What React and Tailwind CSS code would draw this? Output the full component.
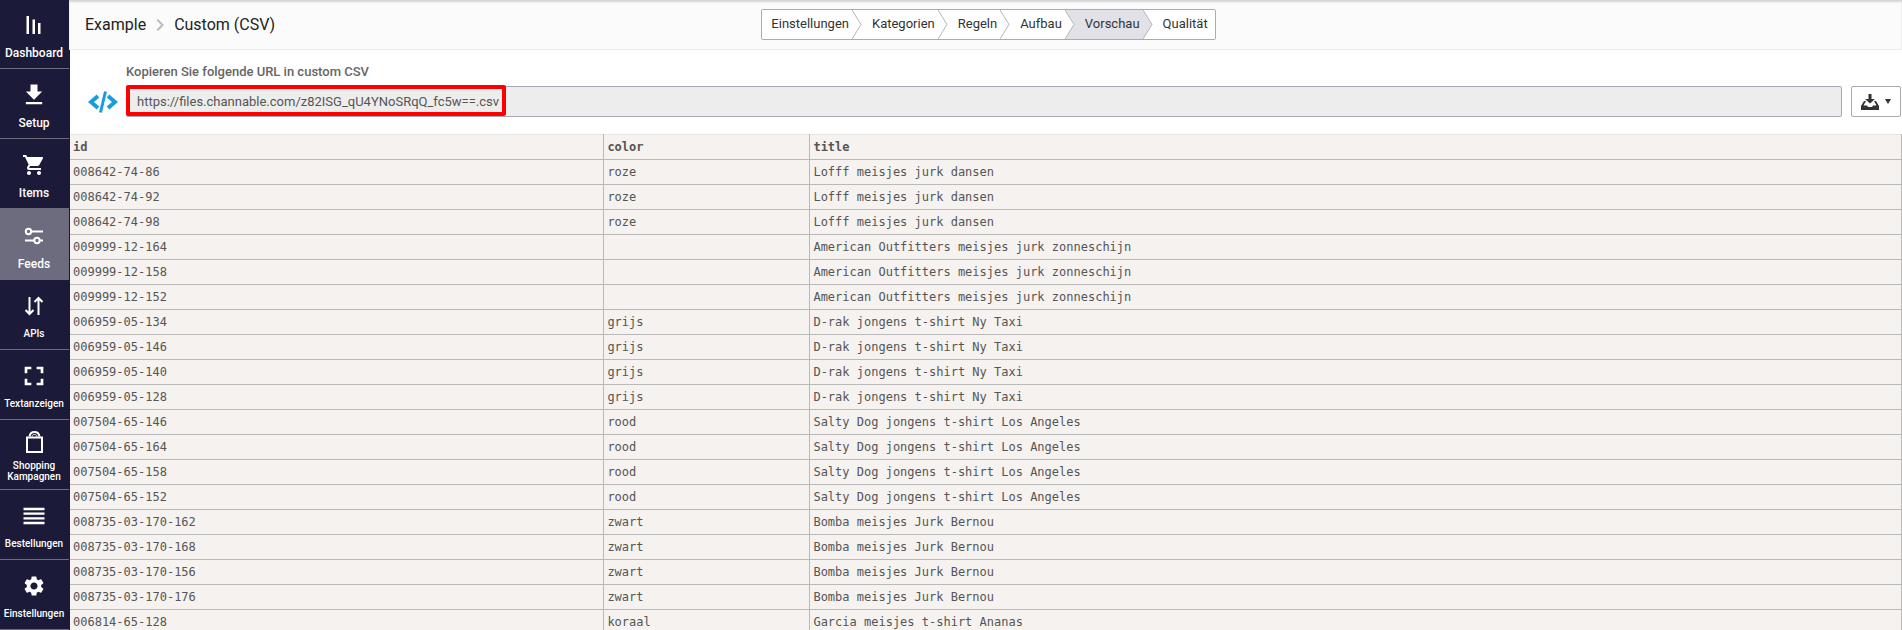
import { Fragment, useState } from "react";
import {
  MdChevronRight,
  MdFileDownload,
  MdFullscreen,
  MdReorder,
  MdSettings,
  MdShoppingCart,
} from "react-icons/md";

const BarsIcon = () => (
  <svg width="24" height="24" viewBox="0 0 24 24" fill="currentColor">
    <path d="M4.5 3h2.500v18H4.500zM10.500 6.500h2.500V21h-2.500zM16 10h2.500v11H16z" />
  </svg>
);

const SlidersIcon = () => (
  <svg width="24" height="24" viewBox="0 0 24 24" fill="none" stroke="currentColor" strokeWidth="2">
    <circle cx="6.5" cy="7.5" r="2.7" />
    <path d="M9.5 7.5H21" />
    <circle cx="15" cy="16.5" r="2.7" />
    <path d="M3 16.5h9M18 16.5h3" />
  </svg>
);

const ArrowsIcon = () => (
  <svg width="24" height="24" viewBox="0 0 24 24" fill="none" stroke="currentColor" strokeWidth="2">
    <path d="M7.5 3v17M3.5 16l4 4 4-4M16.5 21V4M12.5 8l4-4 4 4" />
  </svg>
);

const BagIcon = () => (
  <svg width="24" height="24" viewBox="0 0 24 24" fill="none" stroke="currentColor" strokeWidth="2">
    <path d="M5 7.5h15V22H5z" />
    <path d="M7.5 6.5C8 3.5 9.5 2 12.5 2s4.5 1.5 5 4.5" />
    <path d="M10 6.5c.3-1.500 1.100-2 2.500-2s2.200.5 2.500 2" strokeWidth="1" />
  </svg>
);

const NAV = [
  { label: "Dashboard", icon: BarsIcon },
  { label: "Setup", icon: MdFileDownload, size: 28 },
  { label: "Items", icon: MdShoppingCart, size: 24 },
  { label: "Feeds", icon: SlidersIcon, active: true },
  { label: "APIs", icon: ArrowsIcon, small: true },
  { label: "Textanzeigen", icon: MdFullscreen, size: 32, small: true },
  { label: "Shopping Kampagnen", icon: BagIcon, small: true, wrap: true },
  { label: "Bestellungen", icon: MdReorder, size: 28, small: true },
  { label: "Einstellungen", icon: MdSettings, size: 24, small: true },
];

const STEPS = ["Einstellungen", "Kategorien", "Regeln", "Aufbau", "Vorschau", "Qualität"];

const product = (ids, color, title) => ids.map((id) => ({ id, color, title }));

const ROWS = [
  ...product(["008642-74-86", "008642-74-92", "008642-74-98"], "roze", "Lofff meisjes jurk dansen"),
  ...product(
    ["009999-12-164", "009999-12-158", "009999-12-152"],
    "",
    "American Outfitters meisjes jurk zonneschijn"
  ),
  ...product(
    ["006959-05-134", "006959-05-146", "006959-05-140", "006959-05-128"],
    "grijs",
    "D-rak jongens t-shirt Ny Taxi"
  ),
  ...product(
    ["007504-65-146", "007504-65-164", "007504-65-158", "007504-65-152"],
    "rood",
    "Salty Dog jongens t-shirt Los Angeles"
  ),
  ...product(
    ["008735-03-170-162", "008735-03-170-168", "008735-03-170-156", "008735-03-170-176"],
    "zwart",
    "Bomba meisjes Jurk Bernou"
  ),
  ...product(["006814-65-128"], "koraal", "Garcia meisjes t-shirt Ananas"),
];

function Sidebar() {
  return (
    <nav className="flex w-[69px] shrink-0 flex-col bg-[#1b1a38]">
      {NAV.map(({ label, icon: Icon, size, active, small, wrap }, i) => (
        <a
          key={label}
          href="#"
          className={`flex flex-col items-center border-b border-[#6d6c7f] pr-px text-center font-medium text-white ${
            i === 0 ? "h-[69px]" : active ? "h-[71px] bg-[#6d6c7f]" : "h-[70px]"
          } ${i === 0 ? "pt-[13px]" : wrap ? "pt-[10px]" : active ? "pt-[15px]" : "pt-[14px]"}`}
        >
          <span className="flex h-6 items-center justify-center">
            <Icon size={size} />
          </span>
          <span
            className={`${small ? "text-[10px]" : "text-[12px]"} ${
              wrap ? "mt-[6px] w-[60px] leading-[11px]" : "mt-2 leading-4"
            }`}
          >
            {label}
          </span>
        </a>
      ))}
    </nav>
  );
}

function Stepper({ current, onChange }) {
  return (
    <div className="flex h-[31px] overflow-hidden rounded-xs border border-[#aaaab6] bg-white text-[13px] text-[#333]">
      {STEPS.map((step, i) => {
        const last = i === STEPS.length - 1;
        return (
          <Fragment key={step}>
            <button
              onClick={() => onChange(step)}
              className={`pb-px ${i === 0 ? "pl-[9px]" : "pl-[10px]"} ${last ? "pr-[7px]" : "pr-[3px]"} ${
                step === current ? "bg-[#e2e1e7]" : "bg-white"
              }`}
            >
              {step}
            </button>
            {!last && (
              <svg
                width="10"
                height="29"
                viewBox="0 0 10 29"
                className={`shrink-0 ${STEPS[i + 1] === current ? "bg-[#e2e1e7]" : "bg-white"}`}
              >
                <path d="M0 0l9 14.5L0 29z" fill={step === current ? "#e2e1e7" : "#fff"} />
                <path d="M0 0l9 14.5L0 29" fill="none" stroke="#b5b5bd" />
              </svg>
            )}
          </Fragment>
        );
      })}
    </div>
  );
}

function FeedUrl() {
  return (
    <div className="flex items-end pt-[14px] pr-px pb-[17px] pl-[18px]">
      <svg width="30" height="22" viewBox="0 0 30 22" className="mr-2 mb-1 shrink-0" fill="none" stroke="#189ddb" strokeWidth="4">
        <path d="M10 5l-7 6 7 6M20 5l7 6-7 6" />
        <path d="M17.5.5l-5 21" strokeWidth="3" />
      </svg>
      <div className="min-w-0 flex-1">
        <label htmlFor="feed-url" className="block text-[13px] leading-4 font-medium text-[#666]">
          Kopieren Sie folgende URL in custom CSV
        </label>
        <div className="relative mt-[6px]">
          <input
            id="feed-url"
            readOnly
            value="https://files.channable.com/z82ISG_qU4YNoSRqQ_fc5w==.csv"
            className="block h-[31px] w-full rounded-xs border border-[#aaaab6] bg-[#ededed] px-[10px] text-[13px] text-[#555] outline-none"
          />
          {/* highlight around the feed url */}
          <div className="pointer-events-none absolute -top-px left-0 h-[31px] w-[380px] rounded-xs border-4 border-[#ff0000]" />
        </div>
      </div>
      <button
        aria-label="Download"
        className="ml-[9px] flex h-[31px] w-[50px] items-center justify-center gap-[6px] rounded-xs border border-[#aaaab6] bg-white text-[#333]"
      >
        <svg width="18" height="16" viewBox="0 0 18 16" fill="currentColor">
          <path d="M7.5 0h3v5H14L9 9.5 4 5h3.5z" />
          <path d="M3 7h2L2.5 11.500H6l1 1.500h4l1-1.500h3.500L13 7h2l3 5v4H0v-4z" />
        </svg>
        <svg width="6" height="5" viewBox="0 0 6 5" fill="currentColor">
          <path d="M0 0h6L3 5z" />
        </svg>
      </button>
    </div>
  );
}

function PreviewTable() {
  return (
    <table className="w-full table-fixed border-collapse border-r border-[#b9b9b9] bg-[#f5f2ef] text-left font-['DejaVu_Sans_Mono',monospace] text-[12px] leading-4 text-[#555]">
      <colgroup>
        <col className="w-[29.15%]" />
        <col className="w-[11.25%]" />
        <col />
      </colgroup>
      <thead>
        <tr className="h-[25px] border-t border-t-[#e5e5e5]">
          {["id", "color", "title"].map((h) => (
            <th key={h} className="border-r border-b border-r-[#b9b9b9] border-b-[#b9b9b9] px-[3px] font-bold">
              {h}
            </th>
          ))}
        </tr>
      </thead>
      <tbody>
        {ROWS.map((row) => (
          <tr key={row.id} className="h-[25px]">
            <td className="border-r border-b border-[#b9b9b9] px-[3px]">{row.id}</td>
            <td className="border-r border-b border-[#b9b9b9] px-[3px]">{row.color}</td>
            <td className="border-r border-b border-[#b9b9b9] px-[3px]">{row.title}</td>
          </tr>
        ))}
      </tbody>
    </table>
  );
}

export default function App() {
  const [step, setStep] = useState("Vorschau");

  return (
    <div className="flex h-screen overflow-hidden bg-white font-[Roboto,sans-serif]">
      <Sidebar />
      <div className="flex min-w-0 flex-1 flex-col">
        <header className="flex h-[50px] shrink-0 items-center border-b border-[#ebebeb] bg-[#fbfbfb] pr-[10px] pl-4 shadow-[inset_0_2px_2px_#d4d4d4]">
          <div className="flex flex-1 items-center text-[16px] text-[#222]">
            <a href="#">Example</a>
            <MdChevronRight size={24} className="mx-[2px] text-[#bbb]" />
            <span>Custom (CSV)</span>
          </div>
          <Stepper current={step} onChange={setStep} />
          <div className="flex-1" />
        </header>
        <main className="min-h-0 flex-1 overflow-hidden border-l border-[#1b1a38]">
          <FeedUrl />
          <PreviewTable />
        </main>
      </div>
    </div>
  );
}
